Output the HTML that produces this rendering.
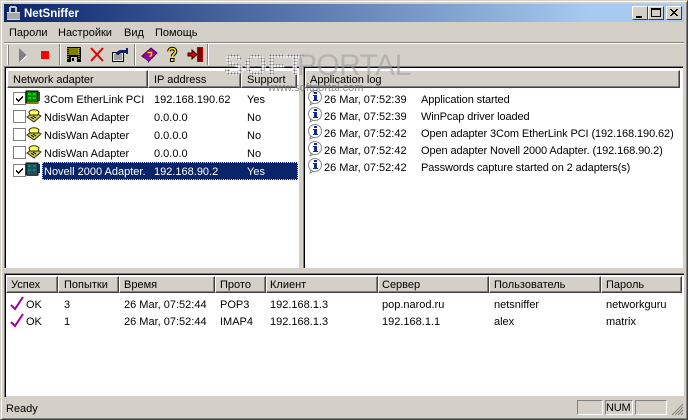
<!DOCTYPE html>
<html><head><meta charset="utf-8">
<style>
*{box-sizing:border-box}
html,body{margin:0;padding:0}
body{width:688px;height:420px;overflow:hidden;background:#d4d0c8;position:relative;font:11px "Liberation Sans",sans-serif;color:#000}
.a{position:absolute}
.t{position:absolute;white-space:nowrap;line-height:13px;height:13px}
.l{letter-spacing:-.1px}
.h{position:absolute;background:#d4d0c8;border-top:1px solid #fff;border-left:1px solid #fff;border-right:1px solid #404040;border-bottom:1px solid #404040;box-shadow:inset -1px -1px 0 #808080}
.sep{position:absolute;width:2px;top:44px;height:21px;background:#808080;border-right:1px solid #fff}
.cb{position:absolute;left:13px;width:13px;height:13px;background:#fff;border:1px solid #808080}
svg{position:absolute;shape-rendering:crispEdges;overflow:visible}
.btn{position:absolute;top:6px;width:16px;height:14px;background:#d4d0c8;border-top:1px solid #fff;border-left:1px solid #fff;border-right:1px solid #404040;border-bottom:1px solid #404040}
</style></head><body>
<!-- window frame -->
<div class="a" style="left:0;top:0;width:688px;height:420px;border-top:1px solid #d4d0c8;border-left:1px solid #d4d0c8;border-right:1px solid #404040;border-bottom:1px solid #404040;box-shadow:inset 1px 1px 0 #fff,inset -1px -1px 0 #808080"></div>
<!-- title -->
<div class="a" style="left:4px;top:4px;width:680px;height:18px;background:linear-gradient(90deg,#0a246a 0%,#a6caf0 86%,#a6caf0 100%)"></div>
<svg style="left:6px;top:5px" width="16" height="16"><path d="M4 1h6v1h1v5h-2v-4h-4v4h-2v-5h1z" fill="#c8c8c8"/><rect x="1" y="7" width="13" height="8" fill="#d8d8d8"/><path d="M1 9h13M1 11h13M1 13h13" stroke="#777"/></svg>
<div class="t" style="left:24px;top:7px;color:#fff;font-weight:bold;font-size:11.500px;height:14px;line-height:14px">NetSniffer</div>
<div class="btn" style="left:632px"><div class="a" style="left:3px;top:9px;width:6px;height:2px;background:#000"></div></div>
<div class="btn" style="left:648px"><div class="a" style="left:2px;top:1px;width:10px;height:9px;border:1px solid #000;border-top-width:2px"></div></div>
<div class="btn" style="left:666px"><svg style="left:3px;top:2px" width="9" height="8"><path d="M0 0h2v1h1v1h2v-1h1v-1h2v1h-1v1h-1v1h-1v1h1v1h1v1h1v1h-2v-1h-1v-1h-2v1h-1v1h-2v-1h1v-1h1v-1h1v-1h-1v-1h-1v-1h-1z" fill="#000"/></svg></div>
<!-- menu -->
<div class="t" style="left:9px;top:27px">Пароли</div>
<div class="t" style="left:58px;top:27px">Настройки</div>
<div class="t" style="left:124px;top:27px">Вид</div>
<div class="t" style="left:155px;top:27px">Помощь</div>
<div class="a" style="left:4px;top:42px;width:680px;height:1px;background:#808080"></div>
<div class="a" style="left:4px;top:43px;width:680px;height:1px;background:#fff"></div>
<!-- toolbar -->
<div class="a" style="left:7px;top:45px;width:2px;height:20px;background:#fff;border-right:1px solid #808080"></div>
<div class="sep" style="left:59px"></div>
<div class="sep" style="left:134px"></div>
<div class="sep" style="left:207px"></div>
<svg style="left:19px;top:48px" width="9" height="15"><path d="M0 0l8 7.500l-8 7z" fill="#808080" shape-rendering="auto"/><path d="M1 14l7-6.500" stroke="#fff" shape-rendering="auto"/></svg>
<div class="a" style="left:41px;top:51px;width:8px;height:8px;background:#f00"></div>
<svg style="left:67px;top:47px" width="14" height="15"><rect width="14" height="15" fill="#000"/><rect x="2" y="1" width="10" height="7" fill="#808000"/><rect x="4" y="10" width="6" height="5" fill="#c8c8c8"/><rect x="5" y="11" width="2" height="3" fill="#000"/><path d="M1 1v1M1 3v1M1 5v1M1 7v1M1 9v1M1 11v1M12 1v1M12 3v1M12 5v1M12 7v1M12 9v1M12 11v1" stroke="#ff0"/></svg>
<svg style="left:90px;top:47px" width="14" height="15"><path d="M1 1l12 13M13 1l-12 13" stroke="#e00000" stroke-width="2" shape-rendering="auto"/></svg>
<svg style="left:112px;top:48px" width="17" height="14"><rect x="0.500" y="4.500" width="11" height="9" fill="#e8e8e8" stroke="#000"/><path d="M2 7h8M2 9h8M2 11h8" stroke="#555"/><path d="M3 5l5-3h6v-2h2v6h-2v-1h-4l-5 2z" fill="#102060"/></svg>
<svg style="left:141px;top:47px" width="17" height="16"><path d="M1 9l9-8l6 5l-9 9z" fill="#a000a0" stroke="#400040" shape-rendering="auto"/><path d="M6.500 5.500h4v3l-2 1" stroke="#ffd800" stroke-width="1.500" fill="none" shape-rendering="auto"/><path d="M2 11l5 4" stroke="#e0e0e0" shape-rendering="auto"/></svg>
<svg style="left:167px;top:47px" width="10" height="15"><g fill="none" shape-rendering="auto"><path d="M2 4.500c0-4 6.500-4 6.500 0c0 2.500-3 2.500-3 5" stroke="#000" stroke-width="3.500"/><path d="M2 4.500c0-4 6.500-4 6.500 0c0 2.500-3 2.500-3 5" stroke="#ffe800" stroke-width="1.600"/></g><rect x="3.500" y="11.500" width="3.500" height="3" fill="#ffe800" stroke="#000"/></svg>
<svg style="left:187px;top:47px" width="17" height="15"><rect x="10" y="0" width="6" height="15" fill="#c00000"/><path d="M12 1v13M14 1v13" stroke="#400000"/><path d="M1 6h4v-3l5 4.500l-5 4.500v-3h-4z" fill="#e00000" stroke="#300" shape-rendering="auto"/></svg>

<!-- left panel -->
<div class="a" style="left:4px;top:66px;width:295px;height:202px;background:#000;border-top:1px solid #808080;border-left:1px solid #808080"></div>
<div class="a" style="left:6px;top:68px;width:293px;height:200px;background:#fff"></div>
<div class="h" style="left:7px;top:70px;width:141px;height:18px"></div>
<div class="h" style="left:148px;top:70px;width:93px;height:18px"></div>
<div class="h" style="left:241px;top:70px;width:56px;height:18px"></div>
<div class="t" style="left:13px;top:74px">Network adapter</div>
<div class="t" style="left:154px;top:74px">IP address</div>
<div class="t" style="left:247px;top:74px">Support</div>
<!-- selected -->
<div class="a" style="left:42px;top:162px;width:256px;height:18px;background:#0a246a;outline:1px dotted #d4d0c8;outline-offset:-1px"></div>

<div class="cb" style="top:92px"><svg style="left:1px;top:1px" width="9" height="9"><path d="M1 3v3h1v1h1v1h1v-1h1v-1h1v-1h1v-1h1v-2h-1v1h-1v1h-1v1h-1v1h-1v-1h-1v-1h-1z" fill="#000"/></svg></div>
<div class="cb" style="top:110px"></div>
<div class="cb" style="top:128px"></div>
<div class="cb" style="top:146px"></div>
<div class="cb" style="top:164px"><svg style="left:1px;top:1px" width="9" height="9"><path d="M1 3v3h1v1h1v1h1v-1h1v-1h1v-1h1v-1h1v-2h-1v1h-1v1h-1v1h-1v1h-1v-1h-1v-1h-1z" fill="#000"/></svg></div>

<!-- adapter icons -->
<svg style="left:26px;top:91px" width="15" height="14"><rect width="12" height="12" fill="#008000" stroke="#000"/><path d="M2 2h3v2h-3zM2 6h3v2h-3zM7 2h3v2h-3zM7 6h3v2h-3z" fill="#00e000"/><rect x="12" y="1" width="2" height="9" fill="#404040"/><path d="M1 12h11" stroke="#808000" stroke-width="2"/></svg>
<svg style="left:26px;top:108px" width="16" height="15"><path d="M1 9l7-5l7 4l-7 6z" fill="#c8c860" stroke="#303000" shape-rendering="auto"/><path d="M3 4c2-3 8-3 10 0l-1 3l-8 0z" fill="#ffff60" stroke="#303000" shape-rendering="auto"/><path d="M5 9l3 2M7 8l3 2" stroke="#000" shape-rendering="auto"/></svg>
<svg style="left:26px;top:126px" width="16" height="15"><path d="M1 9l7-5l7 4l-7 6z" fill="#c8c860" stroke="#303000" shape-rendering="auto"/><path d="M3 4c2-3 8-3 10 0l-1 3l-8 0z" fill="#ffff60" stroke="#303000" shape-rendering="auto"/><path d="M5 9l3 2M7 8l3 2" stroke="#000" shape-rendering="auto"/></svg>
<svg style="left:26px;top:144px" width="16" height="15"><path d="M1 9l7-5l7 4l-7 6z" fill="#c8c860" stroke="#303000" shape-rendering="auto"/><path d="M3 4c2-3 8-3 10 0l-1 3l-8 0z" fill="#ffff60" stroke="#303000" shape-rendering="auto"/><path d="M5 9l3 2M7 8l3 2" stroke="#000" shape-rendering="auto"/></svg>
<svg style="left:26px;top:163px" width="15" height="14"><rect width="12" height="12" fill="#1c5060" stroke="#000"/><path d="M2 2h3v2h-3zM2 6h3v2h-3zM7 2h3v2h-3zM7 6h3v2h-3z" fill="#108070"/><rect x="12" y="1" width="2" height="9" fill="#203050"/><path d="M1 12h11" stroke="#304050" stroke-width="2"/></svg>

<div class="t" style="left:44px;top:94px">3Com EtherLink PCI</div><div class="t" style="left:154px;top:94px">192.168.190.62</div><div class="t" style="left:247px;top:94px">Yes</div>
<div class="t" style="left:44px;top:112px">NdisWan Adapter</div><div class="t" style="left:154px;top:112px">0.0.0.0</div><div class="t" style="left:247px;top:112px">No</div>
<div class="t" style="left:44px;top:130px">NdisWan Adapter</div><div class="t" style="left:154px;top:130px">0.0.0.0</div><div class="t" style="left:247px;top:130px">No</div>
<div class="t" style="left:44px;top:148px">NdisWan Adapter</div><div class="t" style="left:154px;top:148px">0.0.0.0</div><div class="t" style="left:247px;top:148px">No</div>
<div class="t" style="left:44px;top:166px;color:#fff">Novell 2000 Adapter.</div><div class="t" style="left:154px;top:166px;color:#fff">192.168.90.2</div><div class="t" style="left:247px;top:166px;color:#fff">Yes</div>

<!-- right panel -->
<div class="a" style="left:303px;top:66px;width:380px;height:202px;background:#000;border-top:1px solid #808080;border-left:1px solid #808080"></div>
<div class="a" style="left:305px;top:68px;width:378px;height:200px;background:#fff"></div>
<div class="h" style="left:305px;top:70px;width:375px;height:18px"></div>
<div class="t" style="left:310px;top:74px">Application log</div>

<svg style="left:307px;top:90px" width="16" height="15"><g shape-rendering="auto"><path d="M4 11l-1 4l4-2z" fill="#fff" stroke="#888"/><circle cx="8" cy="7" r="6.500" fill="#fff" stroke="#888"/></g><rect x="7" y="2" width="3" height="2" fill="#102a90"/><rect x="6" y="5" width="4" height="1" fill="#102a90"/><rect x="7" y="6" width="3" height="4" fill="#102a90"/><rect x="6" y="10" width="5" height="1" fill="#102a90"/></svg>
<svg style="left:307px;top:107px" width="16" height="15"><g shape-rendering="auto"><path d="M4 11l-1 4l4-2z" fill="#fff" stroke="#888"/><circle cx="8" cy="7" r="6.500" fill="#fff" stroke="#888"/></g><rect x="7" y="2" width="3" height="2" fill="#102a90"/><rect x="6" y="5" width="4" height="1" fill="#102a90"/><rect x="7" y="6" width="3" height="4" fill="#102a90"/><rect x="6" y="10" width="5" height="1" fill="#102a90"/></svg>
<svg style="left:307px;top:124px" width="16" height="15"><g shape-rendering="auto"><path d="M4 11l-1 4l4-2z" fill="#fff" stroke="#888"/><circle cx="8" cy="7" r="6.500" fill="#fff" stroke="#888"/></g><rect x="7" y="2" width="3" height="2" fill="#102a90"/><rect x="6" y="5" width="4" height="1" fill="#102a90"/><rect x="7" y="6" width="3" height="4" fill="#102a90"/><rect x="6" y="10" width="5" height="1" fill="#102a90"/></svg>
<svg style="left:307px;top:141px" width="16" height="15"><g shape-rendering="auto"><path d="M4 11l-1 4l4-2z" fill="#fff" stroke="#888"/><circle cx="8" cy="7" r="6.500" fill="#fff" stroke="#888"/></g><rect x="7" y="2" width="3" height="2" fill="#102a90"/><rect x="6" y="5" width="4" height="1" fill="#102a90"/><rect x="7" y="6" width="3" height="4" fill="#102a90"/><rect x="6" y="10" width="5" height="1" fill="#102a90"/></svg>
<svg style="left:307px;top:158px" width="16" height="15"><g shape-rendering="auto"><path d="M4 11l-1 4l4-2z" fill="#fff" stroke="#888"/><circle cx="8" cy="7" r="6.500" fill="#fff" stroke="#888"/></g><rect x="7" y="2" width="3" height="2" fill="#102a90"/><rect x="6" y="5" width="4" height="1" fill="#102a90"/><rect x="7" y="6" width="3" height="4" fill="#102a90"/><rect x="6" y="10" width="5" height="1" fill="#102a90"/></svg>

<div class="t" style="left:324px;top:94px">26 Mar, 07:52:39</div><div class="t l" style="left:421px;top:94px">Application started</div>
<div class="t" style="left:324px;top:111px">26 Mar, 07:52:39</div><div class="t l" style="left:421px;top:111px">WinPcap driver loaded</div>
<div class="t" style="left:324px;top:128px">26 Mar, 07:52:42</div><div class="t l" style="left:421px;top:128px">Open adapter 3Com EtherLink PCI (192.168.190.62)</div>
<div class="t" style="left:324px;top:145px">26 Mar, 07:52:42</div><div class="t l" style="left:421px;top:145px">Open adapter Novell 2000 Adapter. (192.168.90.2)</div>
<div class="t" style="left:324px;top:162px">26 Mar, 07:52:42</div><div class="t l" style="left:421px;top:162px">Passwords capture started on 2 adapters(s)</div>

<!-- bottom panel -->
<div class="a" style="left:4px;top:273px;width:680px;height:124px;background:#000;border-top:1px solid #808080;border-left:1px solid #808080"></div>
<div class="a" style="left:6px;top:275px;width:678px;height:122px;background:#fff;border-bottom:1px solid #d4d0c8"></div>
<div class="h" style="left:6px;top:276px;width:52px;height:17px"></div>
<div class="h" style="left:58px;top:276px;width:61px;height:17px"></div>
<div class="h" style="left:119px;top:276px;width:96px;height:17px"></div>
<div class="h" style="left:215px;top:276px;width:51px;height:17px"></div>
<div class="h" style="left:266px;top:276px;width:112px;height:17px"></div>
<div class="h" style="left:378px;top:276px;width:111px;height:17px"></div>
<div class="h" style="left:489px;top:276px;width:112px;height:17px"></div>
<div class="h" style="left:601px;top:276px;width:81px;height:17px"></div>
<div class="t" style="left:11px;top:279px">Успех</div>
<div class="t" style="left:64px;top:279px">Попытки</div>
<div class="t" style="left:124px;top:279px">Время</div>
<div class="t" style="left:220px;top:279px">Прото</div>
<div class="t" style="left:270px;top:279px">Клиент</div>
<div class="t" style="left:382px;top:279px">Сервер</div>
<div class="t" style="left:494px;top:279px">Пользователь</div>
<div class="t" style="left:606px;top:279px">Пароль</div>

<svg style="left:10px;top:296px" width="14" height="14"><path d="M1 8l4 4l8-12" fill="none" stroke="#a000a0" stroke-width="2" shape-rendering="auto" transform="translate(0 1)"/></svg>
<svg style="left:10px;top:313px" width="14" height="14"><path d="M1 8l4 4l8-12" fill="none" stroke="#a000a0" stroke-width="2" shape-rendering="auto" transform="translate(0 1)"/></svg>

<div class="t" style="left:26px;top:299px">OK</div><div class="t" style="left:64px;top:299px">3</div><div class="t" style="left:124px;top:299px">26 Mar, 07:52:44</div><div class="t" style="left:220px;top:299px">POP3</div><div class="t" style="left:270px;top:299px">192.168.1.3</div><div class="t" style="left:382px;top:299px">pop.narod.ru</div><div class="t" style="left:494px;top:299px">netsniffer</div><div class="t" style="left:606px;top:299px">networkguru</div>
<div class="t" style="left:26px;top:316px">OK</div><div class="t" style="left:64px;top:316px">1</div><div class="t" style="left:124px;top:316px">26 Mar, 07:52:44</div><div class="t" style="left:220px;top:316px">IMAP4</div><div class="t" style="left:270px;top:316px">192.168.1.3</div><div class="t" style="left:382px;top:316px">192.168.1.1</div><div class="t" style="left:494px;top:316px">alex</div><div class="t" style="left:606px;top:316px">matrix</div>

<!-- status -->
<div class="t" style="left:6px;top:403px">Ready</div>
<div class="a" style="left:577px;top:400px;width:26px;height:15px;border:1px solid #808080;border-right-color:#fff;border-bottom-color:#fff"></div>
<div class="a" style="left:605px;top:400px;width:28px;height:15px;border:1px solid #808080;border-right-color:#fff;border-bottom-color:#fff"></div>
<div class="t" style="left:606px;top:402px;letter-spacing:-.2px">NUM</div>
<div class="a" style="left:635px;top:400px;width:32px;height:15px;border:1px solid #808080;border-right-color:#fff;border-bottom-color:#fff"></div>
<svg style="left:671px;top:403px" width="13" height="13"><path d="M1 12L12 1M4 12L12 4M7 12l5-5M10 12l2-2" stroke="#808080" shape-rendering="auto"/></svg>

<!-- watermark -->
<div class="t" style="left:224px;top:51px;height:30px;line-height:30px;font-size:30px;font-weight:bold;color:transparent;background:radial-gradient(circle,#777 42%,#eee 48%) 0 0/3px 3px;-webkit-background-clip:text;background-clip:text">SOFT</div>
<div class="t" style="left:297px;top:51px;height:30px;line-height:30px;font-size:30px;color:#a0a0a0;opacity:.6;letter-spacing:-.6px">PORTAL</div>
<div class="t" style="left:268px;top:82px;color:#707070;opacity:.8">www.softportal.com</div>
</body></html>
